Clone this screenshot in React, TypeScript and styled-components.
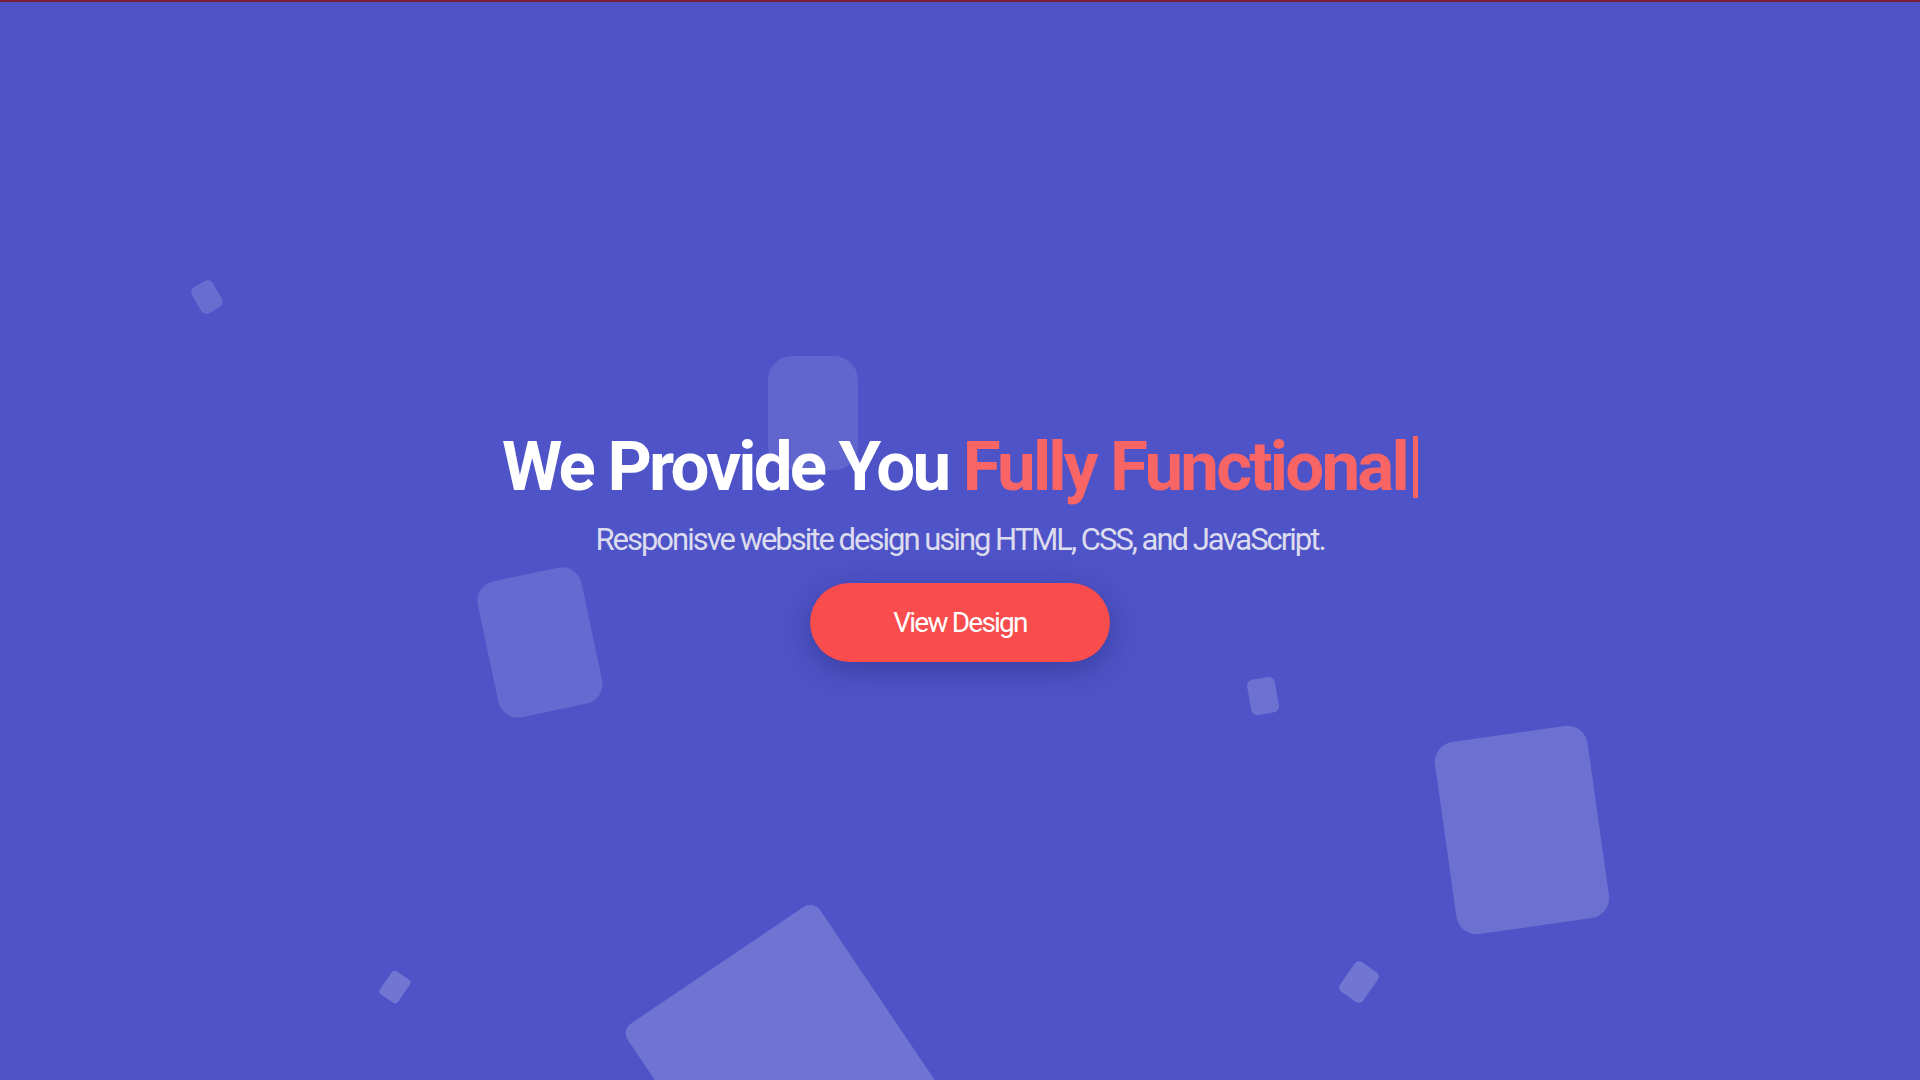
import React from 'react';
import styled, { createGlobalStyle } from 'styled-components';

const GlobalStyle = createGlobalStyle`
  html, body {
    margin: 0;
    padding: 0;
    overflow: hidden;
  }
  * {
    box-sizing: border-box;
  }
`;

type ShapeData = {
  x: number;
  y: number;
  w: number;
  h: number;
  rot: number;
  alpha: number;
  radius: number;
};

const shapes: ShapeData[] = [
  { x: 207, y: 297, w: 24, h: 30, rot: -30, alpha: 0.15, radius: 6 },
  { x: 813, y: 413, w: 90, h: 114, rot: 0, alpha: 0.11, radius: 24 },
  { x: 540, y: 642, w: 106, h: 139, rot: -12, alpha: 0.13, radius: 20 },
  { x: 1263, y: 696, w: 28, h: 36, rot: -10, alpha: 0.18, radius: 6 },
  { x: 1522, y: 830, w: 154, h: 194, rot: -8, alpha: 0.17, radius: 20 },
  { x: 395, y: 987, w: 22, h: 28, rot: 35, alpha: 0.2, radius: 4 },
  { x: 1359, y: 982, w: 28, h: 36, rot: 35, alpha: 0.2, radius: 5 },
  { x: 790, y: 1073, w: 232, h: 260, rot: -34, alpha: 0.19, radius: 12 },
];

const Hero = styled.section`
  position: relative;
  width: 100vw;
  height: 100vh;
  background: #4e54c8;
  border-top: 2px solid #7d1f3a;
  overflow: hidden;
  display: flex;
  justify-content: center;
  align-items: center;
  font-family: Roboto, 'Liberation Sans', sans-serif;
`;

const Shapes = styled.ul`
  position: absolute;
  inset: 0;
  margin: 0;
  padding: 0;
  list-style: none;
`;

const Shape = styled.li<{ $s: ShapeData }>`
  position: absolute;
  left: ${(p) => p.$s.x - p.$s.w / 2}px;
  top: ${(p) => p.$s.y - p.$s.h / 2 - 2}px;
  width: ${(p) => p.$s.w}px;
  height: ${(p) => p.$s.h}px;
  border-radius: ${(p) => p.$s.radius}px;
  background: rgba(255, 255, 255, ${(p) => p.$s.alpha});
  transform: rotate(${(p) => p.$s.rot}deg);
`;

const Content = styled.div`
  position: relative;
  z-index: 1;
  display: flex;
  flex-direction: column;
  align-items: center;
  margin-top: 12px;
`;

const Title = styled.h1`
  margin: 0;
  color: #ffffff;
  font-size: 69px;
  font-weight: 700;
  line-height: 1;
  letter-spacing: -2.8px;
  white-space: nowrap;
`;

const Accent = styled.span`
  color: #f96464;
`;

const Cursor = styled.span`
  display: inline-block;
  width: 5px;
  height: 62px;
  margin-left: 6px;
  vertical-align: -8px;
  background: #f96464;
`;

const Subtitle = styled.p`
  margin: 20px 0 0;
  color: #dcdcee;
  font-size: 31px;
  font-weight: 400;
  line-height: 1.2;
  letter-spacing: -2px;
`;

const Button = styled.button`
  margin-top: 25px;
  width: 300px;
  height: 79px;
  border: none;
  border-radius: 40px;
  background: #f94c4c;
  color: #ffffff;
  font-family: inherit;
  font-size: 28px;
  letter-spacing: -1.8px;
  box-shadow: 0 8px 30px rgba(20, 20, 80, 0.35);
  cursor: pointer;
`;

export default function App() {
  return (
    <>
      <GlobalStyle />
      <Hero>
        <Shapes>
          {shapes.map((s, i) => (
            <Shape key={i} $s={s} />
          ))}
        </Shapes>
        <Content>
          <Title>
            We Provide You <Accent>Fully Functional</Accent>
            <Cursor />
          </Title>
          <Subtitle>Responisve website design using HTML, CSS, and JavaScript.</Subtitle>
          <Button>View Design</Button>
        </Content>
      </Hero>
    </>
  );
}
